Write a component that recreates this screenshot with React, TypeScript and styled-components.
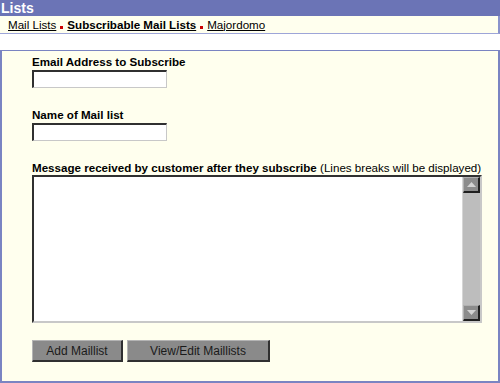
import React from 'react'
import styled, { createGlobalStyle } from 'styled-components'

const BLUE = '#6b74b6'
const CREAM = '#ffffee'

const GlobalStyle = createGlobalStyle`
  body {
    margin: 0;
    background: #ffffff;
    font-family: "Liberation Sans", Arial, sans-serif;
    font-size: 11.6px;
    color: #000;
  }
`

const Arrow = ({ dir }: { dir: 'up' | 'down' }) => (
  <svg width="9" height="5" viewBox="0 0 9 5">
    <path d={dir === 'up' ? 'M0 5h9L4.5 0z' : 'M0 0h9L4.5 5z'} fill="#d4d4d4" />
  </svg>
)

export default function App() {
  return (
    <>
      <GlobalStyle />
      <Header>Lists</Header>
      <Nav>
        <NavLink href="#">Mail Lists</NavLink>
        <Sep />
        <NavLink href="#" $active>
          Subscribable Mail Lists
        </NavLink>
        <Sep />
        <NavLink href="#">Majordomo</NavLink>
      </Nav>
      <Panel>
        <Field>
          <Label>Email Address to Subscribe</Label>
          <TextInput type="text" />
        </Field>
        <Field>
          <Label>Name of Mail list</Label>
          <TextInput type="text" />
        </Field>
        <Field>
          <Label>
            Message received by customer after they subscribe <Note>(Lines breaks will be displayed)</Note>
          </Label>
          <MessageBox>
            <Message />
            <ScrollBar>
              <ScrollButton>
                <Arrow dir="up" />
              </ScrollButton>
              <Track />
              <ScrollButton>
                <Arrow dir="down" />
              </ScrollButton>
            </ScrollBar>
          </MessageBox>
        </Field>
        <Buttons>
          <Button $width={91}>Add Maillist</Button>
          <Button $width={143}>View/Edit Maillists</Button>
        </Buttons>
      </Panel>
    </>
  )
}

const Header = styled.div`
  height: 16px;
  background: ${BLUE};
  color: #ffffff;
  font-weight: bold;
  font-size: 14px;
  line-height: 16px;
  padding-left: 1px;
`
const Nav = styled.div`
  display: flex;
  align-items: center;
  gap: 4px;
  height: 17px;
  padding-left: 8px;
  background: ${CREAM};
  border-bottom: 1px solid #9da5d8;
  border-right: 2px solid #8a93cc;
`
const NavLink = styled.a<{ $active?: boolean }>`
  color: #000;
  text-decoration: underline;
  font-size: 11.6px;
  line-height: 14px;
  font-weight: ${(p) => (p.$active ? 'bold' : 'normal')};
`
const Sep = styled.span`
  width: 3px;
  height: 3px;
  background: #cc0000;
  align-self: flex-end;
  margin-bottom: 4px;
`
const Panel = styled.div`
  margin-top: 16px;
  height: 327px;
  padding: 3px 0 0 30px;
  background: ${CREAM};
  border: 2px solid #7a84c2;
  border-top-width: 1px;
  display: flex;
  flex-direction: column;
  gap: 19px;
`
const Field = styled.div`
  display: flex;
  flex-direction: column;
`
const Label = styled.div`
  font-weight: bold;
  font-size: 11.6px;
  line-height: 15px;
  margin-bottom: 1px;
`
const Note = styled.span`
  font-weight: normal;
`
const TextInput = styled.input`
  box-sizing: border-box;
  width: 135px;
  height: 18px;
  margin: 0;
  padding: 0 2px;
  background: #ffffff;
  border-top: 2px solid #303030;
  border-left: 2px solid #303030;
  border-right: 1px solid #c8c8c8;
  border-bottom: 1px solid #c8c8c8;
  outline: none;
`
const MessageBox = styled.div`
  box-sizing: border-box;
  display: flex;
  width: 450px;
  height: 148px;
  margin-top: -1px;
  background: #ffffff;
  border-top: 2px solid #303030;
  border-left: 2px solid #303030;
  border-right: 2px solid #c8c8c8;
  border-bottom: 2px solid #c8c8c8;
`
const Message = styled.textarea`
  flex: 1;
  margin: 0;
  padding: 2px;
  border: none;
  resize: none;
  outline: none;
  background: transparent;
`
const ScrollBar = styled.div`
  display: flex;
  flex-direction: column;
  width: 17px;
  background: #bdbdbd;
  border-left: 1px solid #d6d6d6;
`
const ScrollButton = styled.div`
  box-sizing: border-box;
  height: 16px;
  display: flex;
  align-items: center;
  justify-content: center;
  background: #8c8c8c;
  border-top: 1px solid #b0b0b0;
  border-left: 1px solid #b0b0b0;
  border-right: 2px solid #202020;
  border-bottom: 2px solid #202020;
`
const Track = styled.div`
  flex: 1;
`
const Buttons = styled.div`
  display: flex;
  gap: 4px;
  margin-top: -2px;
`
const Button = styled.button<{ $width: number }>`
  box-sizing: border-box;
  width: ${(p) => p.$width}px;
  height: 22px;
  padding: 0;
  background: #8a8a8a;
  color: #1a1a1a;
  font-family: "Liberation Sans", Arial, sans-serif;
  font-size: 12px;
  border-top: 1px solid #b4b4b4;
  border-left: 1px solid #b4b4b4;
  border-right: 2px solid #303030;
  border-bottom: 2px solid #303030;
  cursor: pointer;
`
